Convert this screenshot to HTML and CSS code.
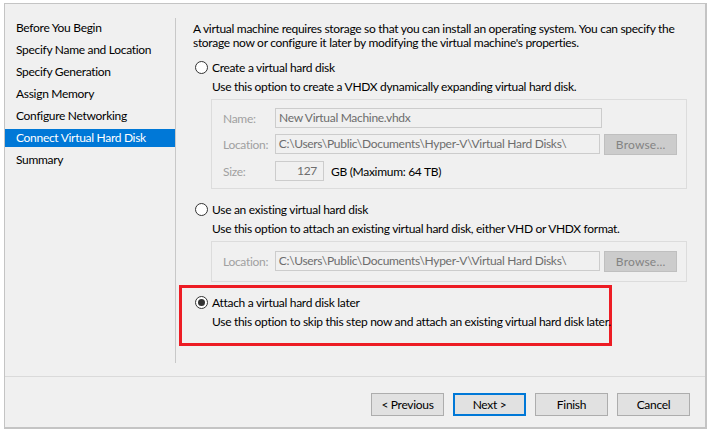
FILE: index.html
```html
<!DOCTYPE html>
<html>
<head>
<meta charset="utf-8">
<link rel="stylesheet" href="styles.css">
</head>
<body>
<div class="window">
  <div class="main">
    <ul class="nav">
      <li>Before You Begin</li>
      <li>Specify Name and Location</li>
      <li>Specify Generation</li>
      <li>Assign Memory</li>
      <li>Configure Networking</li>
      <li class="active">Connect Virtual Hard Disk</li>
      <li>Summary</li>
    </ul>
    <div class="vsep"></div>
    <div class="content">
      <p class="intro">A virtual machine requires storage so that you can install an operating system. You can specify the storage now or configure it later by modifying the virtual machine's properties.</p>

      <div class="radio-row first"><span class="radio"></span><span>Create a virtual hard disk</span></div>
      <div class="desc">Use this option to create a VHDX dynamically expanding virtual hard disk.</div>
      <div class="group g1">
        <div class="field"><span class="lbl">Name:</span><span class="input wide">New Virtual Machine.vhdx</span></div>
        <div class="field"><span class="lbl">Location:</span><span class="input wide">C:\Users\Public\Documents\Hyper-V\Virtual Hard Disks\</span><span class="browse">Browse...</span></div>
        <div class="field size"><span class="lbl">Size:</span><span class="input small">127</span><span class="unit">GB (Maximum: 64 TB)</span></div>
      </div>

      <div class="radio-row second"><span class="radio"></span><span>Use an existing virtual hard disk</span></div>
      <div class="desc">Use this option to attach an existing virtual hard disk, either VHD or VHDX format.</div>
      <div class="group g2">
        <div class="field"><span class="lbl">Location:</span><span class="input wide">C:\Users\Public\Documents\Hyper-V\Virtual Hard Disks\</span><span class="browse">Browse...</span></div>
      </div>

      <div class="highlight">
        <div class="radio-row"><span class="radio checked"></span><span>Attach a virtual hard disk later</span></div>
        <div class="desc">Use this option to skip this step now and attach an existing virtual hard disk later.</div>
      </div>
    </div>
  </div>
  <div class="footer">
    <button class="btn">&lt; Previous</button>
    <button class="btn default">Next &gt;</button>
    <button class="btn">Finish</button>
    <button class="btn">Cancel</button>
  </div>
</div>
</body>
</html>
```

FILE: styles.css
```css
html, body {
  margin: 0;
  padding: 0;
  background: #ffffff;
}
body {
  font-family: Lato, "Noto Sans", sans-serif;
  font-size: 12px;
  letter-spacing: -0.3px;
  color: #000;
}
.window {
  margin: 3px 0 0 4px;
  width: 700px;
  height: 423px;
  background: #f0f0f0;
  border-style: solid;
  border-color: #c4c4c4;
  border-width: 1px 2px 2px 1px;
  display: flex;
  flex-direction: column;
}
.main {
  display: flex;
  height: 372px;
}
.nav {
  list-style: none;
  margin: 0;
  padding: 15px 0 0 0;
  width: 170px;
  display: flex;
  flex-direction: column;
  gap: 4px;
}
.nav li {
  height: 18px;
  line-height: 18px;
  padding-left: 11px;
  white-space: nowrap;
}
.nav li.active {
  background: #0078d7;
  color: #fff;
}
.vsep {
  width: 1px;
  background: #c8c8c8;
  margin: 14px 0 13px 0;
}
.content {
  padding: 18px 0 0 17px;
  width: 512px;
}
.intro {
  margin: 0;
  line-height: 14px;
  width: 510px;
}
.radio-row {
  display: flex;
  align-items: center;
  height: 16px;
  padding-left: 2px;
  gap: 4px;
}
.radio-row.first { margin-top: 9px; }
.radio-row.second { margin-top: 12px; }
.radio {
  width: 11px;
  height: 11px;
  border: 1px solid #333;
  border-radius: 50%;
  background: #fff;
  display: flex;
  align-items: center;
  justify-content: center;
}
.radio.checked::after {
  content: "";
  width: 7px;
  height: 7px;
  border-radius: 50%;
  background: #333;
}
.desc {
  margin-top: 4px;
  height: 16px;
  line-height: 16px;
  padding-left: 19px;
  white-space: nowrap;
}
.group {
  margin: 4px 0 0 18px;
  width: 476px;
  border: 1px solid #dcdcdc;
  box-sizing: border-box;
  padding: 8px 9px 0 11px;
  display: flex;
  flex-direction: column;
  gap: 6px;
}
.g1 { height: 90px; }
.g2 { height: 41px; padding-top: 9px; }
.field {
  display: flex;
  align-items: center;
  height: 20px;
}
.field.size { margin-top: 1px; }
.lbl {
  width: 52px;
  color: #a0a0a0;
}
.input {
  height: 20px;
  box-sizing: border-box;
  border: 1px solid #cccccc;
  background: #f0f0f0;
  color: #6d6d6d;
  line-height: 18px;
  padding: 0 3px;
  white-space: nowrap;
  overflow: hidden;
}
.input.wide { width: 327px; }
.input.small {
  width: 49px;
  text-align: right;
  padding-right: 6px;
}
.unit {
  margin-left: 7px;
}
.browse {
  margin-left: 4px;
  width: 73px;
  height: 21px;
  box-sizing: border-box;
  border: 1px solid #bfbfbf;
  background: #cccccc;
  color: #838383;
  text-align: center;
  line-height: 19px;
  letter-spacing: 0.2px;
}
.highlight {
  margin: 3px 0 0 -14px;
  width: 433px;
  height: 61px;
  box-sizing: border-box;
  border: 3px solid #ed1c24;
  padding: 6px 0 0 11px;
}
.highlight .radio-row { padding-left: 2px; }
.footer {
  border-top: 1px solid #dadada;
  flex: 1;
  display: flex;
  justify-content: flex-end;
  align-items: flex-start;
  padding: 16px 15px 0 0;
  gap: 9px;
}
.btn {
  width: 73px;
  height: 23px;
  box-sizing: border-box;
  border: 1px solid #adadad;
  background: #e1e1e1;
  font-family: inherit;
  font-size: 12px;
  letter-spacing: inherit;
  color: #000;
  padding: 0;
}
.btn.default {
  border: 2px solid #0078d7;
}
```
